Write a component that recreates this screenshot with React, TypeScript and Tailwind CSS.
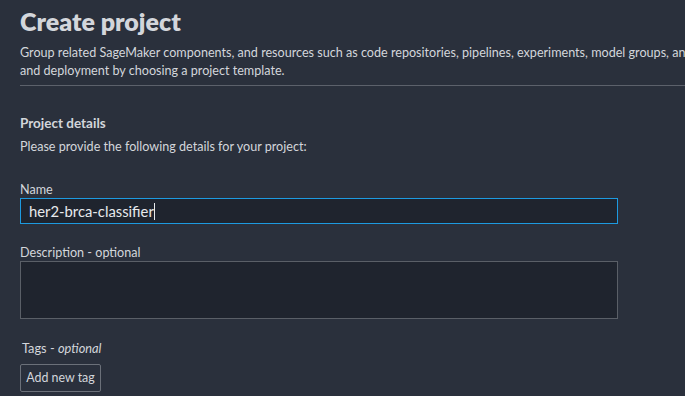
export default function App() {
  return (
    <div
      className="w-[685px] h-[396px] overflow-hidden bg-[#2a303c] text-[#d1d5db]"
      style={{ fontFamily: 'Lato, "Noto Sans", sans-serif' }}
    >
      <div className="pl-5 pt-[3px]">
        <h1 className="text-[25px] leading-[36px] font-extrabold text-[#d3d6db]">Create project</h1>
        <p className="mt-[5px] text-[12.6px] leading-[18px] text-[#d3d6db] whitespace-nowrap">
          Group related SageMaker components, and resources such as code repositories, pipelines, experiments, model groups, and
          <br />
          and deployment by choosing a project template.
        </p>
        <div className="mt-[5px] h-px bg-[#5c616b]" />

        <h2 className="mt-[27px] text-[13.5px] leading-[20px] font-bold text-[#d3d6db]">Project details</h2>
        <p className="mt-[5px] text-[12.6px] leading-[18px] text-[#d3d6db]">Please provide the following details for your project:</p>

        <label className="block mt-[26px] text-[12.6px] leading-[16px] text-[#d3d6db]">Name</label>
        <div className="mt-0 w-[598px] h-[26px] border border-[#1d9ae0] bg-[#1f242e] flex items-center pl-2">
          <span className="text-[14.8px] text-[#e8eaed]">her2-brca-classifier</span>
          <span className="w-px h-[17px] bg-[#e8eaed]" />
        </div>

        <label className="block mt-[21px] text-[12.6px] leading-[16px] text-[#d3d6db]">Description - optional</label>
        <div className="mt-0 w-[598px] h-[58px] border border-[#5a5f67] bg-[#1f242e]" />

        <div className="mt-[21px] ml-[2px] text-[12.8px] leading-[16px] text-[#d3d6db]">
          Tags - <span className="italic">optional</span>
        </div>
        <button className="mt-[8px] h-[28px] w-[81px] border border-[#6b7079] rounded-[2px] text-[12.4px] text-[#d3d6db] bg-transparent">
          Add new tag
        </button>
      </div>
    </div>
  );
}
